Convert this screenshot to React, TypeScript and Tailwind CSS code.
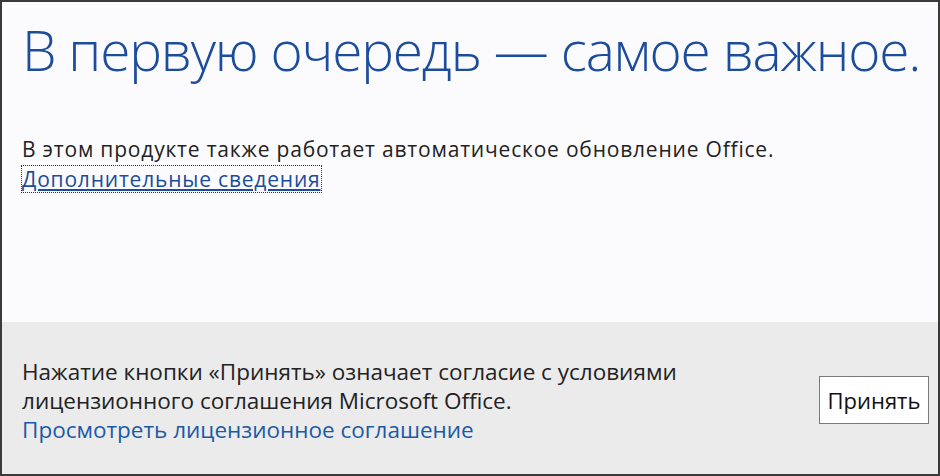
export default function App() {
  return (
    <div
      className="w-[940px] h-[476px] flex flex-col border-2 border-[#3a3a3a] bg-[#fbfbfd] overflow-hidden"
      style={{ fontFamily: '"Open Sans", "Noto Sans", sans-serif' }}
    >
      {/* Top part */}
      <div className="flex-1 pl-[20px] pr-[10px] pt-[12px]">
        <h1 className="text-[55px] leading-[72px] font-light text-[#1c4c9c] tracking-[-1.2px] whitespace-nowrap">
          В первую очередь — самое важное.
        </h1>
        <div className="mt-[48px] text-[21px] leading-[30px] text-[#222] tracking-[0.8px]">
          <p>В этом продукте также работает автоматическое обновление Office.</p>
          <a
            href="#"
            className="inline-block leading-[26px] text-[#1c4c9c] underline underline-offset-2 outline-1 outline-dotted outline-[#333]"
          >
            Дополнительные сведения
          </a>
        </div>
      </div>

      {/* Bottom part */}
      <div className="h-[152px] bg-[#ebebeb] flex items-center justify-between pl-[20px] pr-[9px] pt-[4px]">
        <div className="text-[22.5px] leading-[29px] text-[#222]">
          <p>Нажатие кнопки «Принять» означает согласие с условиями</p>
          <p>лицензионного соглашения Microsoft Office.</p>
          <a href="#" className="text-[#1a5aa6]">
            Просмотреть лицензионное соглашение
          </a>
        </div>
        <button className="w-[110px] h-[48px] bg-white border border-[#7a7a7a] text-[22px] text-[#111]">
          Принять
        </button>
      </div>
    </div>
  )
}
